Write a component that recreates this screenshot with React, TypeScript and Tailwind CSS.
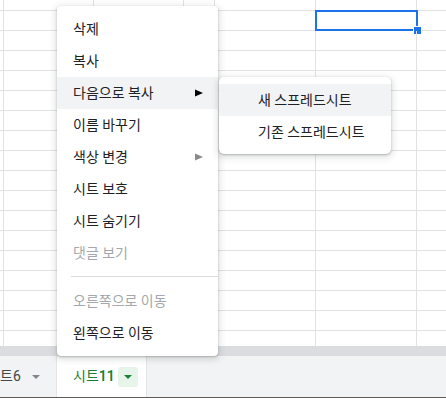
import React from 'react';

const FONT = 'font-[Roboto,"Noto_Sans_CJK_KR",sans-serif]';

// column widths, each cell draws its own right border
const COLS = [4, 90, 90, 31, 101, 101];
const ROWS = 17;

type Item = { label: string; disabled?: boolean; sub?: boolean; active?: boolean };

const MENU_TOP: Item[] = [
    { label: '삭제' },
    { label: '복사' },
    { label: '다음으로 복사', sub: true, active: true },
    { label: '이름 바꾸기' },
    { label: '색상 변경', sub: true },
    { label: '시트 보호' },
    { label: '시트 숨기기' },
    { label: '댓글 보기', disabled: true },
];

const MENU_BOTTOM: Item[] = [
    { label: '오른쪽으로 이동', disabled: true },
    { label: '왼쪽으로 이동' },
];

const SubArrow: React.FC<{ dark?: boolean }> = ({ dark }) => (
    <svg width="8" height="8" viewBox="0 0 8 8" className="shrink-0">
        <polygon points="0,0.5 8,4 0,7.5" fill={dark ? '#000000' : '#8a8a8a'} />
    </svg>
);

const MenuRow: React.FC<{ item: Item }> = ({ item }) => (
    <div
        className={`h-[32px] flex items-center justify-between pl-[16px] pr-[15px] text-[14px] leading-none ${
            item.active ? 'bg-[#f1f3f4]' : ''
        } ${item.disabled ? 'text-[#a4a7ab]' : 'text-[#202124]'}`}
    >
        <span>{item.label}</span>
        {item.sub && <SubArrow dark={item.active} />}
    </div>
);

const Grid: React.FC = () => (
    <div className="h-[346px] overflow-hidden flex flex-col">
        {Array.from({ length: ROWS + 1 }).map((_, r) => (
            <div
                key={r}
                className={`flex shrink-0 border-b border-[#e2e2e2] ${r === 0 ? 'h-[11px]' : 'h-[20px]'}`}
            >
                {COLS.map((w, c) => (
                    <div
                        key={c}
                        className="relative shrink-0 border-r border-[#e2e2e2]"
                        style={{ width: w }}
                    >
                        {r === 1 && c === 5 && (
                            <div className="absolute -left-px -top-px w-[103px] h-[21px] border-2 border-[#1a73e8]">
                                <div className="absolute -right-[5px] -bottom-[5px] w-[7px] h-[7px] bg-[#1a73e8] outline outline-1 outline-white" />
                            </div>
                        )}
                    </div>
                ))}
                <div className="flex-1" />
            </div>
        ))}
    </div>
);

const TabBar: React.FC = () => (
    <div className="h-[41px] bg-[#f1f3f4] flex items-stretch">
        <div className="w-[57px] flex items-center border-r border-[#e3e4e6]">
            <span className="text-[14px] text-[#444746] whitespace-nowrap">트6</span>
            <svg width="8" height="4" viewBox="0 0 8 4" className="ml-[11px]">
                <polygon points="0,0 8,0 4,4" fill="#80868b" />
            </svg>
        </div>
        <div className="w-[90px] bg-white flex items-center pl-[16px] border-r border-[#e3e4e6]">
            <span className="text-[14px] text-[#188038] whitespace-nowrap">
                시트<span className="font-semibold">11</span>
            </span>
            <div className="ml-[3px] w-[20px] h-[20px] rounded-[3px] bg-[#e6f4ea] flex items-center justify-center">
                <svg width="8" height="4" viewBox="0 0 8 4">
                    <polygon points="0,0 8,0 4,4" fill="#188038" />
                </svg>
            </div>
        </div>
    </div>
);

export default function App() {
    return (
        <div className={`relative w-[446px] h-[398px] overflow-hidden bg-white ${FONT}`}>
            <Grid />
            <div className="h-[10px] bg-[#dadce0]" />
            <TabBar />
            <div className="h-px bg-[#5e5a57]" />

            {/* sheet tab context menu */}
            <div className="absolute left-[57px] top-[6px] w-[161px] py-[7px] bg-white rounded-[4px] shadow-[0_2px_6px_2px_rgba(60,64,67,0.15),0_1px_2px_rgba(60,64,67,0.3)]">
                {MENU_TOP.map((item) => (
                    <MenuRow key={item.label} item={item} />
                ))}
                <div className="ml-[14px] mt-[7px] mb-[8px] h-px bg-[#dadce0]" />
                {MENU_BOTTOM.map((item) => (
                    <MenuRow key={item.label} item={item} />
                ))}
            </div>

            {/* copy-to submenu */}
            <div className="absolute left-[219px] top-[77px] w-[172px] pt-[7px] pb-[6px] bg-white rounded-[5px] shadow-[0_2px_6px_2px_rgba(60,64,67,0.15),0_1px_2px_rgba(60,64,67,0.3)]">
                <div className="h-[32px] flex items-center pl-[39px] bg-[#f1f3f4] text-[14px] leading-none text-[#202124]">
                    새 스프레드시트
                </div>
                <div className="h-[32px] flex items-center pl-[39px] text-[14px] leading-none text-[#202124]">
                    기존 스프레드시트
                </div>
            </div>
        </div>
    );
}
